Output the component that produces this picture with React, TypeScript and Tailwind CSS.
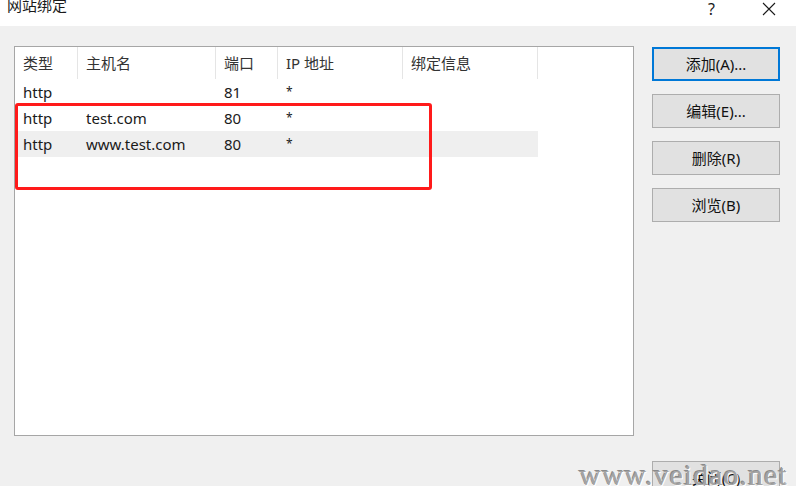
const font = { fontFamily: '"Noto Sans", "Noto Sans CJK SC", sans-serif' };

const cols = [
  { label: "类型", w: "w-[63px]" },
  { label: "主机名", w: "w-[138px]" },
  { label: "端口", w: "w-[62px]" },
  { label: "IP 地址", w: "w-[125px]" },
  { label: "绑定信息", w: "w-[135px]" },
];

const rows = [
  ["http", "", "81", "*", ""],
  ["http", "test.com", "80", "*", ""],
  ["http", "www.test.com", "80", "*", ""],
];

function Btn({ label, focused }: { label: string; focused?: boolean }) {
  return (
    <div
      className={
        "w-[128px] h-[34px] flex items-center justify-center bg-[#e1e1e1] text-[15px] text-[#111] " +
        (focused ? "border-2 border-[#0078d7]" : "border border-[#adadad]")
      }
    >
      {label}
    </div>
  );
}

export default function App() {
  return (
    <div
      className="w-[796px] h-[486px] bg-[#f0f0f0] relative overflow-hidden text-[#1a1a1a]"
      style={font}
    >
      <div className="h-[26px] bg-white flex items-start justify-between">
        <span className="pl-[7px] text-[15px] leading-none -mt-[2px]">网站绑定</span>
        <div className="flex items-start">
          <span className="text-[16px] leading-none mt-[1px] w-[50px] pl-[8px]">?</span>
          <svg width="46" height="16" viewBox="0 0 46 16" className="mt-[1px]">
            <path d="M13 2 L25 14 M25 2 L13 14" stroke="#1a1a1a" strokeWidth="1.1" />
          </svg>
        </div>
      </div>

      <div className="flex pt-[20px] pl-[14px]">
        <div className="w-[620px] h-[390px] bg-white border border-[#a6a6a6]">
          <div className="flex h-[32px] text-[15px]">
            {cols.map((c) => (
              <div
                key={c.label}
                className={c.w + " pl-2 flex items-center border-r border-[#e5e5e5] text-[#333]"}
              >
                {c.label}
              </div>
            ))}
          </div>
          {rows.map((r, i) => (
            <div
              key={i}
              className={"flex h-[26px] w-[523px] text-[15px] " + (i === 2 ? "bg-[#efefef]" : "")}
            >
              {r.map((v, j) => (
                <div key={j} className={cols[j].w + " pl-2 flex items-center"}>
                  {v === "*" ? <span className="text-[12px]">*</span> : v}
                </div>
              ))}
            </div>
          ))}
        </div>

        <div className="ml-[18px] mt-[1px] flex flex-col gap-[13px]">
          <Btn label="添加(A)..." focused />
          <Btn label="编辑(E)..." />
          <Btn label="删除(R)" />
          <Btn label="浏览(B)" />
        </div>
      </div>

      <div className="flex justify-end pr-[16px] pt-[25px]">
        <Btn label="关闭(C)" />
      </div>

      <div className="absolute left-[15px] top-[103px] w-[417px] h-[87px] border-[3px] border-[#ff1a1a] rounded-[3px]" />

      <div
        className="absolute left-[579px] top-[460px] text-[30px] leading-none text-[#a3a3a3] tracking-[1px] [text-shadow:1px_1px_0_#ffffff,-1px_-1px_0_#8a8a8a]"
        style={{ fontFamily: '"Liberation Serif", serif' }}
      >
        www.veidao.net
      </div>
    </div>
  );
}
